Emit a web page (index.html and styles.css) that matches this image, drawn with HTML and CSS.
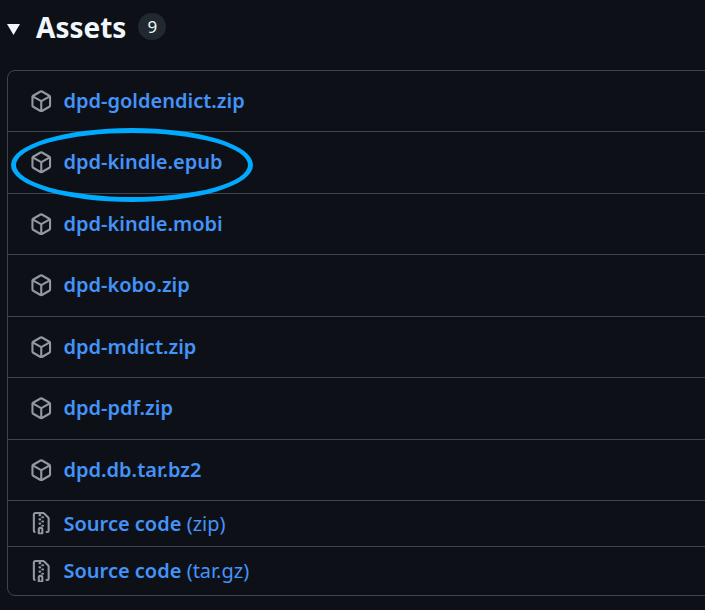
FILE: index.html
```html
<!DOCTYPE html>
<html lang="en">
<head>
<meta charset="utf-8">
<title>Assets</title>
<link rel="stylesheet" href="styles.css">
</head>
<body>
<svg class="defs" aria-hidden="true">
  <symbol id="package" viewBox="0 0 16 16"><path d="m8.878.392 5.25 3.045c.54.314.872.89.872 1.514v6.098a1.75 1.75 0 0 1-.872 1.514l-5.25 3.045a1.75 1.75 0 0 1-1.756 0l-5.25-3.045A1.75 1.75 0 0 1 1 11.049V4.951c0-.624.332-1.201.872-1.514L7.122.392a1.75 1.75 0 0 1 1.756 0ZM7.875 1.69l-4.63 2.685L8 7.133l4.755-2.758-4.63-2.685a.248.248 0 0 0-.25 0ZM2.5 5.677v5.372c0 .09.047.171.125.216l4.625 2.683V8.432Zm6.25 8.271 4.625-2.683a.25.25 0 0 0 .125-.216V5.677L8.75 8.432Z"/></symbol>
  <symbol id="zip" viewBox="0 0 16 16"><path d="M3.5 1.75v11.5c0 .09.048.173.126.217a.75.75 0 0 1-.752 1.298A1.748 1.748 0 0 1 2 13.25V1.75C2 .784 2.784 0 3.75 0h5.586c.464 0 .909.185 1.237.513l2.914 2.914c.329.328.513.773.513 1.237v8.586A1.75 1.75 0 0 1 12.25 15h-.5a.75.75 0 0 1 0-1.5h.5a.25.25 0 0 0 .25-.25V4.664a.25.25 0 0 0-.073-.177L9.513 1.573a.25.25 0 0 0-.177-.073H7.25a.75.75 0 0 1 0 1.5h-.5a.75.75 0 0 1 0-1.5h-3a.25.25 0 0 0-.25.25Zm3.75 8.75h.5c.966 0 1.75.784 1.75 1.75v3a.75.75 0 0 1-.75.75h-2.5a.75.75 0 0 1-.75-.75v-3c0-.966.784-1.75 1.75-1.75ZM6 5.25a.75.75 0 0 1 .75-.75h.5a.75.75 0 0 1 0 1.5h-.5A.75.75 0 0 1 6 5.25Zm.75 2.25h.5a.75.75 0 0 1 0 1.5h-.5a.75.75 0 0 1 0-1.5ZM8 6.75A.75.75 0 0 1 8.75 6h.5a.75.75 0 0 1 0 1.5h-.5A.75.75 0 0 1 8 6.75ZM8.75 3h.5a.75.75 0 0 1 0 1.5h-.5a.75.75 0 0 1 0-1.5ZM8 9.75A.75.75 0 0 1 8.75 9h.5a.75.75 0 0 1 0 1.5h-.5A.75.75 0 0 1 8 9.75Zm-1 2.5v2.25h1v-2.25a.25.25 0 0 0-.25-.25h-.5a.25.25 0 0 0-.25.25Z"/></symbol>
</svg>
<main class="assets">
  <header class="summary">
    <svg class="caret" viewBox="0 0 13 11"><path d="M0 0h13L6.5 11z"/></svg>
    <h1 class="title">Assets</h1>
    <span class="counter">9</span>
  </header>
  <ul class="list">
    <li class="row"><svg class="icon"><use href="#package"/></svg><a class="link">dpd-goldendict.zip</a></li>
    <li class="row highlighted"><svg class="icon"><use href="#package"/></svg><a class="link">dpd-kindle.epub</a><span class="ring"></span></li>
    <li class="row"><svg class="icon"><use href="#package"/></svg><a class="link">dpd-kindle.mobi</a></li>
    <li class="row"><svg class="icon"><use href="#package"/></svg><a class="link">dpd-kobo.zip</a></li>
    <li class="row"><svg class="icon"><use href="#package"/></svg><a class="link">dpd-mdict.zip</a></li>
    <li class="row"><svg class="icon"><use href="#package"/></svg><a class="link">dpd-pdf.zip</a></li>
    <li class="row"><svg class="icon"><use href="#package"/></svg><a class="link">dpd.db.tar.bz2</a></li>
    <li class="row source"><svg class="icon"><use href="#zip"/></svg><a class="link">Source code <span class="format">(zip)</span></a></li>
    <li class="row source last"><svg class="icon"><use href="#zip"/></svg><a class="link">Source code <span class="format">(tar.gz)</span></a></li>
  </ul>
</main>
</body>
</html>
```
FILE: styles.css
```css
* { box-sizing: border-box; }
body {
  margin: 0;
  height: 610px;
  overflow: hidden;
  background: #0d1117;
  color: #f0f6fc;
  font-family: "Noto Sans", sans-serif;
}
.defs { display: none; }
.assets { padding-left: 7px; }
.summary {
  display: flex;
  align-items: center;
  height: 70px;
  padding-bottom: 17px;
}
.caret {
  width: 13px;
  height: 11px;
  margin-top: 5px;
  fill: #f0f6fc;
}
.title {
  margin: 0 12px 0 16px;
  font-size: 28px;
  font-weight: 700;
  line-height: 40px;
}
.counter {
  width: 28px;
  height: 27px;
  border-radius: 14px;
  background: #212830;
  font-size: 17px;
  line-height: 27px;
  text-align: center;
}
.list {
  width: 720px;
  height: 526px;
  margin: 0;
  padding: 0;
  list-style: none;
  border: 1px solid #3d444d;
  border-radius: 8px;
}
.row {
  position: relative;
  display: flex;
  align-items: center;
  height: 61.5px;
  padding-left: 22px;
  border-top: 1px solid #3d444d;
}
.row:first-child { height: 60px; border-top: 0; }
.source { height: 46px; }
.last { height: 49px; }
.icon {
  width: 22.5px;
  height: 22.5px;
  margin-right: 11px;
  fill: #9198a1;
}
.link {
  color: #4493f8;
  font-size: 20px;
  font-weight: 600;
  line-height: 30px;
  white-space: nowrap;
}
.format { font-weight: 400; }
.ring {
  position: absolute;
  left: 3px;
  top: -4px;
  width: 242px;
  height: 74px;
  border: 5px solid #00aaff;
  border-radius: 50%;
  z-index: 1;
}
```
